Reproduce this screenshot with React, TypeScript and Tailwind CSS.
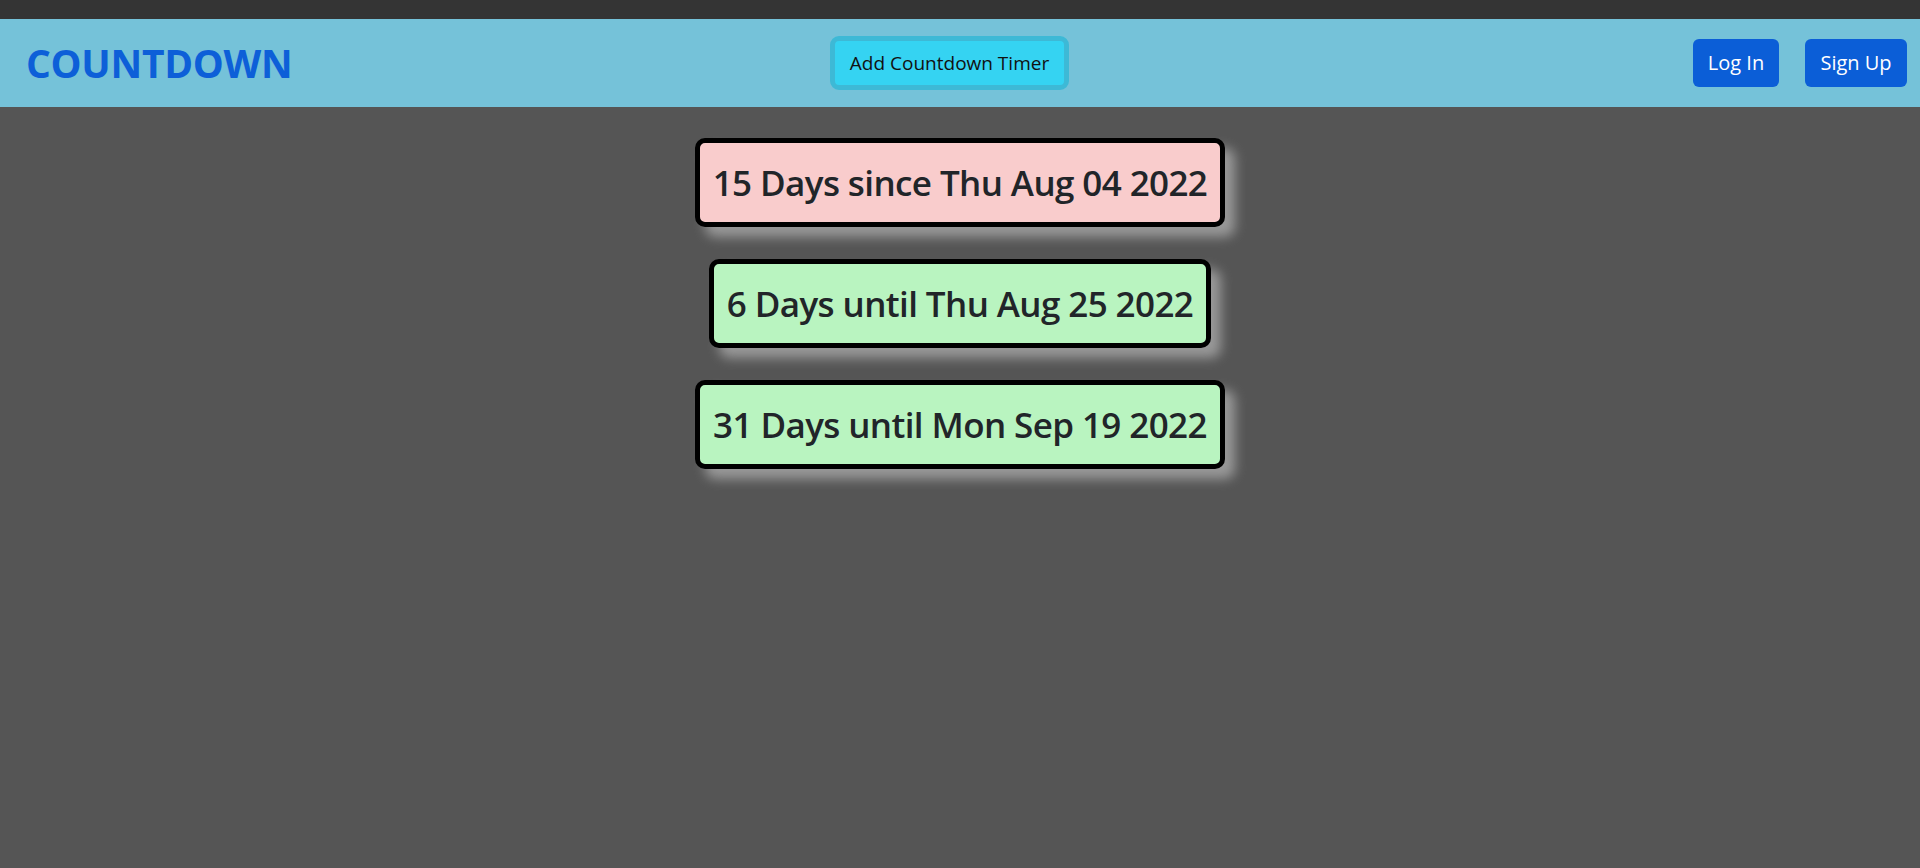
import React from "react";

type Timer = { days: number; label: "since" | "until"; date: string };

const timers: Timer[] = [
  { days: 15, label: "since", date: "Thu Aug 04 2022" },
  { days: 6, label: "until", date: "Thu Aug 25 2022" },
  { days: 31, label: "until", date: "Mon Sep 19 2022" },
];

function TimerCard({ timer }: { timer: Timer }) {
  const past = timer.label === "since";
  return (
    <div
      className={`rounded-[10px] border-[5px] border-black px-[13px] py-[15px] text-[35px] font-semibold leading-[49px] tracking-[-0.6px] text-[#212529] shadow-[10px_10px_12px_#999999] ${
        past ? "bg-[#f9cccc]" : "bg-[#b9f4c0]"
      }`}
    >
      {timer.days} Days {timer.label} {timer.date}
    </div>
  );
}

export default function App() {
  return (
    <div className="flex min-h-screen flex-col bg-[#555555] font-['Open_Sans',sans-serif]">
      <div className="h-[19px] bg-[#343434]" />
      <nav className="flex h-[88px] items-center bg-[#75c2d9] pl-[26px] pr-[13px]">
        <div className="w-[804px]">
          <span className="text-[39px] font-bold tracking-[-0.3px] text-[#0d5fd8]">COUNTDOWN</span>
        </div>
        <button className="h-[54px] w-[239px] rounded-[9px] border-[5px] border-[#3db9d6] bg-[#35d3f2] text-[19px] text-[#111]">
          Add Countdown Timer
        </button>
        <div className="ml-auto flex items-center gap-[26px]">
          <button className="h-[48px] w-[86px] rounded-[6px] bg-[#0b5ed7] text-[20px] text-white">Log In</button>
          <button className="h-[48px] w-[102px] rounded-[6px] bg-[#0b5ed7] text-[20px] text-white">Sign Up</button>
        </div>
      </nav>
      <main className="flex flex-col items-center gap-[32px] pt-[31px]">
        {timers.map((t) => (
          <TimerCard key={t.date} timer={t} />
        ))}
      </main>
    </div>
  );
}
